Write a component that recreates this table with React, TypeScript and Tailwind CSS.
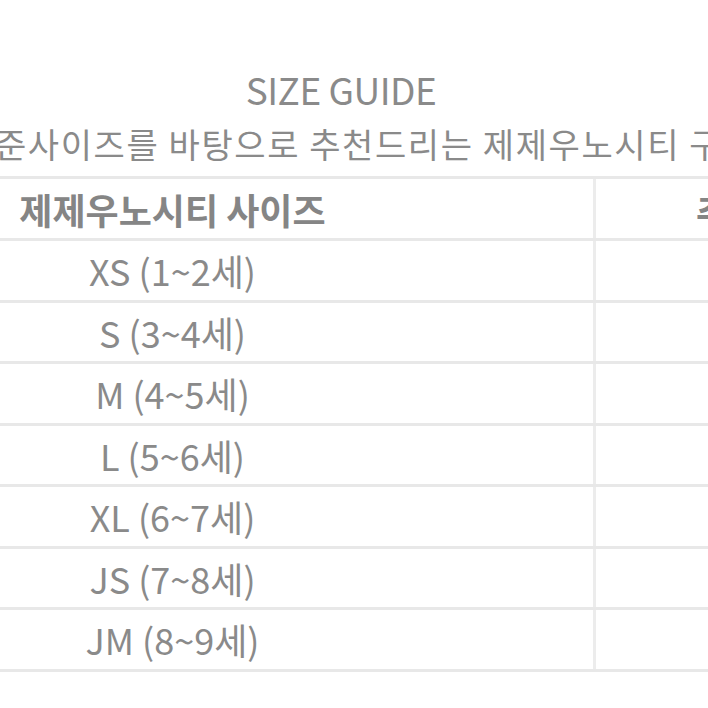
import React from 'react';

const rows = ['XS (1~2세)', 'S (3~4세)', 'M (4~5세)', 'L (5~6세)', 'XL (6~7세)', 'JS (7~8세)', 'JM (8~9세)'];

export default function App() {
  return (
    <div
      className="w-[708px] h-[708px] overflow-hidden bg-white text-[#8a8a8a]"
      style={{ fontFamily: '"Noto Sans CJK KR", "Noto Sans", sans-serif' }}
    >
      <div className="pt-[64px] flex flex-col">
        <h1 className="w-[682px] text-center text-[37px] leading-[50px] tracking-[-0.5px]">SIZE GUIDE</h1>
        <p className="mt-[8px] ml-[-38px] whitespace-nowrap text-[34px] leading-[44px] tracking-[1.6px]">
          기준사이즈를 바탕으로 추천드리는 제제우노시티 구매 사이즈
        </p>

        <div className="mt-[10px] ml-[-248px] w-[1300px] border-t-[3px] border-[#e8e8e8]">
          <div className="grid grid-cols-[844px_362px] h-[62px] border-b-[3px] border-[#e8e8e8]">
            <div className="flex items-center justify-center border-r-[3px] border-[#ececec] text-[36px] font-bold text-[#858585]">
              제제우노시티 사이즈
            </div>
            <div className="flex items-center justify-start pl-[100px] whitespace-nowrap text-[36px] font-bold text-[#858585]">
              추천 연령
            </div>
          </div>
          {rows.map(r => (
            <div key={r} className="grid grid-cols-[844px_362px] h-[61.5px] border-b-[3px] border-[#e8e8e8]">
              <div className="flex items-center justify-center border-r-[3px] border-[#ececec] text-[36px]">
                {r}
              </div>
              <div />
            </div>
          ))}
        </div>
      </div>
    </div>
  );
}
